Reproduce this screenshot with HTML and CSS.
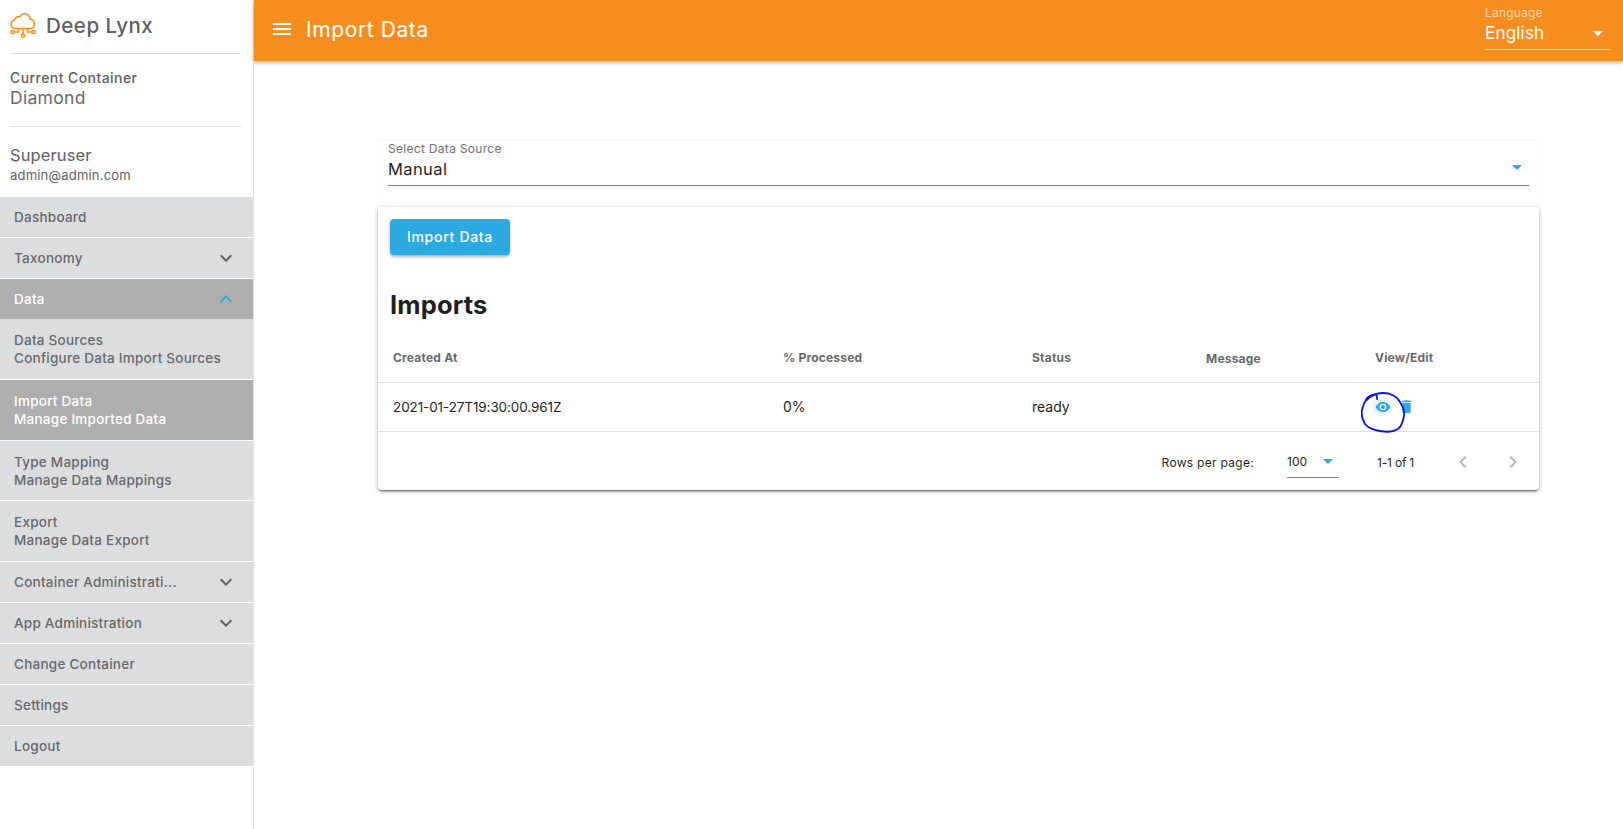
FILE: index.html
```html
<!DOCTYPE html>
<html lang="en">

<head>
  <meta charset="UTF-8">
  <title>Import Data</title>
  <link rel="stylesheet" href="styles.css">
</head>

<body>
  <aside class="sidebar">
    <div class="brand">
      <svg class="brand-icon" viewBox="0 0 26 26" width="26" height="26" fill="none" stroke="#f68d1f" stroke-width="1.500">
        <path d="M5 16.500a4.300 4.300 0 0 1-.4-8.500 5.200 5.200 0 0 1 5.600-3.500A5.300 5.300 0 0 1 14 1.500a6 6 0 0 1 6.200 5.800 4.700 4.700 0 0 1 .8 9.200H5z"/>
        <path d="M13 16.500v5.500M8.500 16.500V20H4M17.500 16.500V20H22"/>
        <circle cx="13" cy="23.600" r="1.600"/>
        <circle cx="2.400" cy="20" r="1.600"/>
        <circle cx="23.600" cy="20" r="1.600"/>
      </svg>
      <span class="brand-name">Deep Lynx</span>
    </div>
    <div class="side-block container-block">
      <div class="block-label">Current Container</div>
      <div class="block-value">Diamond</div>
    </div>
    <div class="user-block">
      <div class="user-name">Superuser</div>
      <div class="user-mail">admin@admin.com</div>
    </div>
    <nav class="nav">
      <div class="nav-item">Dashboard</div>
      <div class="nav-item">Taxonomy
        <svg class="chev" viewBox="0 0 24 24"><path d="M7.400 8.600 12 13.200l4.600-4.600L18 10l-6 6-6-6z"/></svg>
      </div>
      <div class="nav-item nav-active nav-open">Data
        <svg class="chev chev-up" viewBox="0 0 24 24"><path d="M7.400 15.400 12 10.800l4.600 4.600L18 14l-6-6-6 6z"/></svg>
      </div>
      <div class="nav-item nav-sub">Data Sources<br>Configure Data Import Sources</div>
      <div class="nav-item nav-sub nav-active">Import Data<br>Manage Imported Data</div>
      <div class="nav-item nav-sub">Type Mapping<br>Manage Data Mappings</div>
      <div class="nav-item nav-sub">Export<br>Manage Data Export</div>
      <div class="nav-item">Container Administrati...
        <svg class="chev" viewBox="0 0 24 24"><path d="M7.400 8.600 12 13.200l4.600-4.600L18 10l-6 6-6-6z"/></svg>
      </div>
      <div class="nav-item">App Administration
        <svg class="chev" viewBox="0 0 24 24"><path d="M7.400 8.600 12 13.200l4.600-4.600L18 10l-6 6-6-6z"/></svg>
      </div>
      <div class="nav-item">Change Container</div>
      <div class="nav-item">Settings</div>
      <div class="nav-item">Logout</div>
    </nav>
  </aside>

  <div class="main">
    <header class="topbar">
      <svg class="menu-icon" viewBox="0 0 24 24" width="24" height="24"><path d="M3 6h18v2H3zM3 11h18v2H3zM3 16h18v2H3z"/></svg>
      <h1 class="page-title">Import Data</h1>
      <div class="lang">
        <div class="lang-label">Language</div>
        <div class="lang-value">English <span class="caret caret-white"></span></div>
      </div>
    </header>

    <main class="content">
      <div class="source-card">
        <div class="source-label">Select Data Source</div>
        <div class="source-value">Manual <span class="caret caret-blue"></span></div>
      </div>

      <section class="imports-card">
        <button type="button" class="btn-primary">Import Data</button>
        <h2 class="imports-title">Imports</h2>
        <table class="imports-table">
          <thead>
            <tr>
              <th class="col-created">Created At</th>
              <th class="col-processed">% Processed</th>
              <th class="col-status">Status</th>
              <th class="col-message"><span class="message-head">Message</span></th>
              <th class="col-view">View/Edit</th>
            </tr>
          </thead>
          <tbody>
            <tr>
              <td class="col-created">2021-01-27T19:30:00.961Z</td>
              <td>0%</td>
              <td>ready</td>
              <td></td>
              <td class="actions">
                <div class="actions-row">
                  <span class="eye-wrap">
                    <svg viewBox="0 0 24 24" width="16" height="16"><path d="M12 4.500C7 4.500 2.700 7.600 1 12c1.700 4.400 6 7.500 11 7.500s9.300-3.100 11-7.500c-1.700-4.400-6-7.500-11-7.500zM12 17a5 5 0 1 1 0-10 5 5 0 0 1 0 10zm0-8a3 3 0 1 0 0 6 3 3 0 0 0 0-6z"/></svg>
                  </span>
                  <svg class="trash" viewBox="0 0 24 24" width="17" height="17"><path d="M6 19c0 1.100.9 2 2 2h8c1.100 0 2-.9 2-2V7H6zM19 4h-3.500l-1-1h-5l-1 1H5v2h14z"/></svg>
                </div>
                <svg class="scribble" viewBox="0 0 44 41" width="44" height="41" fill="none" stroke="#0a14d8" stroke-width="1.800" stroke-linecap="round" stroke-linejoin="round">
                  <path d="M6 8C10 3 16 1 22 1c7 0 14 3 17 9 3 5 5 10 4 14-1 5-3 11-6 13-5 3-13 3-18 2-6-1-12-3-15-7-3-5-4-9-3-14 1-5 3-9 5-12 3-3 6-4 9-3 1 0 1 2 1 4"/>
                </svg>
              </td>
            </tr>
          </tbody>
        </table>
        <div class="pager">
          <span class="pager-label">Rows per page:</span>
          <span class="pager-select">100 <span class="caret caret-blue"></span></span>
          <span class="pager-range">1-1 of 1</span>
          <svg class="pager-arrow" viewBox="0 0 24 24" width="24" height="24"><path d="M15.400 7.400 14 6l-6 6 6 6 1.400-1.400L10.800 12z"/></svg>
          <svg class="pager-arrow" viewBox="0 0 24 24" width="24" height="24"><path d="M8.600 16.600 10 18l6-6-6-6-1.400 1.400L13.200 12z"/></svg>
        </div>
      </section>
    </main>
  </div>
</body>

</html>
```

FILE: styles.css
```css
* {
  box-sizing: border-box;
}

html,
body {
  height: 100%;
}

body {
  margin: 0;
  display: flex;
  overflow: hidden;
  background-color: #fff;
  color: #1e1f23;
  font-family: "Inter", "Noto Sans", sans-serif;
}

.sidebar {
  width: 254px;
  flex-shrink: 0;
  border-right: 1px solid #e3e3e3;
  color: #5e6064;
}

.brand {
  height: 54px;
  margin: 0 12px 0 10px;
  padding-bottom: 3px;
  display: flex;
  align-items: center;
  gap: 10px;
  border-bottom: 1px solid #e0e0e0;
}

.brand-name {
  font-size: 20.500px;
  font-weight: 500;
  letter-spacing: 0.5px;
}

.side-block {
  margin: 0 12px 0 10px;
}

.container-block {
  height: 73px;
  padding-top: 15px;
  border-bottom: 1px solid #e0e0e0;
}

.block-label {
  font-size: 14px;
  line-height: 18px;
  font-weight: 500;
  letter-spacing: 0.43px;
}

.block-value {
  font-size: 17.500px;
  line-height: 22px;
  letter-spacing: 0.3px;
  color: #66686c;
}

.user-block {
  height: 70px;
  padding: 17px 0 0 10px;
}

.user-name {
  font-size: 16.500px;
  line-height: 22px;
  letter-spacing: 0.1px;
}

.user-mail {
  font-size: 13px;
  line-height: 18px;
  letter-spacing: 0.2px;
}

.nav-item {
  height: 40px;
  margin-bottom: 1px;
  padding: 0 14px;
  display: flex;
  align-items: center;
  justify-content: space-between;
  background-color: #dcddde;
  color: #66686c;
  font-size: 13.500px;
  font-weight: 500;
  letter-spacing: 0.25px;
}

.nav-open {
  margin-bottom: 0;
}

.nav-sub {
  height: 59.750px;
  display: block;
  padding-top: 12px;
  line-height: 18px;
}

.nav-active {
  background-color: #aeaeae;
  color: #fff;
}

.chev {
  width: 24px;
  height: 24px;
  margin-right: 1px;
  fill: #5e6064;
}

.chev-up {
  fill: #2ca9e1;
}

.main {
  flex: 1;
  min-width: 0;
}

.topbar {
  height: 61px;
  padding: 0 0 3px 16px;
  display: flex;
  align-items: center;
  background-color: #f68d1f;
  box-shadow: 0 2px 4px rgba(0, 0, 0, 0.3);
  color: #fff;
}

.menu-icon {
  fill: #fff;
  margin-right: 12px;
}

.page-title {
  flex: 1;
  margin: 0;
  font-size: 21px;
  font-weight: 400;
  letter-spacing: 0.6px;
}

.lang {
  width: 125px;
  height: 50px;
  margin-right: 13px;
  padding-top: 6px;
  align-self: flex-start;
  border-bottom: 1px solid #fde3c6;
}

.lang-label {
  font-size: 12px;
  line-height: 14px;
  letter-spacing: 0.2px;
  color: #fcd6ad;
}

.lang-value {
  position: relative;
  margin-top: 1px;
  font-size: 17px;
  line-height: 24px;
  letter-spacing: 0.2px;
}

.caret {
  position: absolute;
  width: 0;
  height: 0;
  border-left: 5px solid transparent;
  border-right: 5px solid transparent;
  border-top: 5px solid #2ca9e1;
}

.caret-white {
  right: 7px;
  top: 10px;
  border-top-color: #fff;
}

.caret-blue {
  right: 7px;
  top: 9px;
}

.content {
  padding: 80px 84px 0 124px;
}

.source-card {
  height: 66px;
  padding: 0 10px;
  border-radius: 4px 4px 0 0;
  box-shadow: 0 -1px 2px rgba(0, 0, 0, 0.06);
}

.source-label {
  font-size: 12px;
  line-height: 15px;
  letter-spacing: 0.3px;
  color: #6d6e72;
}

.source-value {
  position: relative;
  height: 30px;
  border-bottom: 1px solid #2b9dcf;
  font-size: 16.500px;
  line-height: 26px;
  letter-spacing: 0.4px;
}

.imports-card {
  height: 283px;
  padding-top: 12px;
  border-radius: 4px;
  box-shadow: 0 2px 2px -1px rgba(0, 0, 0, 0.55), 0 1px 5px rgba(0, 0, 0, 0.3);
}

.btn-primary {
  display: block;
  width: 120px;
  height: 36px;
  margin-left: 12px;
  padding-bottom: 2px;
  border: 0;
  border-radius: 4px;
  background-color: #2ca9e1;
  box-shadow: 0 2px 3px rgba(0, 0, 0, 0.3);
  color: #fff;
  font-family: inherit;
  font-size: 14px;
  font-weight: 500;
  letter-spacing: 0.7px;
}

.imports-title {
  margin: 34px 0 0 12px;
  font-size: 25.500px;
  line-height: 32px;
  font-weight: 700;
  letter-spacing: 0.15px;
}

.imports-table {
  width: 100%;
  margin-top: 13px;
  border-collapse: collapse;
  table-layout: fixed;
  font-size: 14px;
}

.imports-table th {
  height: 48px;
  padding: 0 16px;
  text-align: left;
  font-size: 12px;
  font-weight: 700;
  letter-spacing: 0.2px;
  color: #66686c;
  border-bottom: 1px solid #e0e0e0;
}

.imports-table td {
  height: 49px;
  padding: 0 16px;
  border-bottom: 1px solid #e0e0e0;
}

.imports-table .col-created {
  width: 389px;
  padding-left: 15px;
}

td.col-created {
  font-size: 13.500px;
  letter-spacing: -0.1px;
}

.col-processed {
  width: 249px;
}

.col-status {
  width: 174px;
}

.col-message {
  width: 169px;
}

.message-head {
  position: relative;
  top: 1px;
}

.actions {
  position: relative;
}

.actions-row {
  display: flex;
  align-items: center;
  gap: 5px;
  margin-left: -2px;
}

.actions svg {
  fill: #2ca9e1;
}

.eye-wrap {
  display: flex;
  align-items: center;
  justify-content: center;
  width: 20px;
  height: 20px;
  border-radius: 50%;
  background-color: #e6f4fb;
}

.actions .scribble {
  position: absolute;
  left: 2px;
  top: 9px;
  fill: none;
}

.pager {
  height: 60px;
  padding: 1px 14px 0 0;
  display: flex;
  align-items: center;
  justify-content: flex-end;
  font-size: 12px;
}

.pager-label {
  letter-spacing: 0.3px;
}

.pager-select {
  position: relative;
  width: 52px;
  height: 32px;
  margin-left: 33px;
  padding-top: 8px;
  border-bottom: 1px solid #2b9dcf;
}

.pager-select .caret {
  top: 13px;
  right: 6px;
}

.pager-range {
  margin-left: 38px;
  margin-right: 37px;
  letter-spacing: -0.2px;
}

.pager-arrow {
  fill: #b5b5b5;
}

.pager-arrow + .pager-arrow {
  margin-left: 26px;
}
```
